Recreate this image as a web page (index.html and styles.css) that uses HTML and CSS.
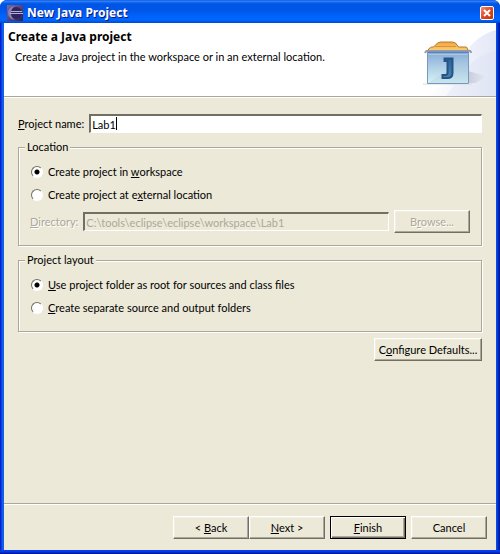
FILE: index.html
```html
<!DOCTYPE html>
<html lang="en">
<head>
  <meta charset="UTF-8">
  <title>New Java Project</title>
  <link rel="stylesheet" href="styles.css">
</head>
<body>
<form class="window">
  <div class="titlebar">
    <svg class="app-icon" width="16" height="16" viewBox="0 0 16 16">
      <defs>
        <linearGradient id="moon" x1="0" y1="0" x2="1" y2="1">
          <stop offset="0" stop-color="#7a6b9c"/>
          <stop offset=".5" stop-color="#54467c"/>
          <stop offset="1" stop-color="#2c2254"/>
        </linearGradient>
      </defs>
      <rect width="16" height="16" fill="url(#moon)"/>
      <circle cx="9" cy="8" r="6" fill="#30245c"/>
      <path d="M8 1C3 2 1 5 1 8s2 6 7 7C5 13 4 11 4 8s1-5 4-7z" fill="#8d80b4"/>
      <path d="M4 6.500h11M3 8.500h13" stroke="#b4b0dc" fill="none"/>
    </svg>
    <span class="caption">New Java Project</span>
    <button type="button" class="close" aria-label="Close">
      <svg width="8" height="8" viewBox="0 0 8 8"><path d="M1 1l6 6M7 1L1 7" stroke="#fff" stroke-width="2"/></svg>
    </button>
  </div>

  <div class="client">
    <div class="header">
      <div class="header-text">
        <h1>Create a Java project</h1>
        <p>Create a Java project in the workspace or in an external location.</p>
      </div>
      <svg class="banner" width="90" height="73" viewBox="0 0 90 73">
        <defs>
          <linearGradient id="sky" x1="0" y1="0" x2="1" y2="0">
            <stop offset="0" stop-color="#fff"/>
            <stop offset="1" stop-color="#e4e8f7"/>
          </linearGradient>
          <linearGradient id="front" x1="0" y1="0" x2="0" y2="1">
            <stop offset="0" stop-color="#86a9d6"/>
            <stop offset=".5" stop-color="#b0d0e6"/>
            <stop offset="1" stop-color="#d8f4f4"/>
          </linearGradient>
          <linearGradient id="folder" x1="0" y1="0" x2="0" y2="1">
            <stop offset="0" stop-color="#f0a43c"/>
            <stop offset="1" stop-color="#fbd078"/>
          </linearGradient>
          <linearGradient id="letter" x1="0" y1="0" x2="0" y2="1">
            <stop offset="0" stop-color="#2a5f96"/>
            <stop offset="1" stop-color="#4a86b8"/>
          </linearGradient>
          <linearGradient id="shade" x1="0" y1="0" x2="1" y2="0">
            <stop offset="0" stop-color="#b4b6c4"/>
            <stop offset="1" stop-color="#b4b6c4" stop-opacity="0"/>
          </linearGradient>
        </defs>
        <path d="M20 73C50 60 54 16 90 7V73z" fill="url(#sky)"/>
        <path d="M40 73C58 50 66 31 90 28V73z" fill="#d6ddf3" opacity=".3"/>
        <path d="M62 60V48L80 53L70 60z" fill="url(#shade)" opacity=".6"/>
        <path d="M17 61H66" stroke="#d8dae2"/>
        <path d="M22.500 28v-2l3-2h2l4-4 3-1h12l3 1 3 4h8l1 2v2z" fill="url(#folder)" stroke="#b87a30"/>
        <path d="M29 23.500h21" stroke="#d99238"/>
        <path d="M19 30q1-3 4-2h38q4-1 4 2" fill="none" stroke="#9a9ca4" stroke-width="2"/>
        <path d="M21.500 28.500h41v32h-41z" fill="url(#front)" stroke="#7898bf"/>
        <path d="M22 29.500h40" stroke="#5f84b6"/>
        <path d="M22 31.500h40" stroke="#a9c6e6"/>
        <path d="M22 60L62 34V60z" fill="#a8c4dc" opacity=".3"/>
        <path d="M41.500 35.500h5V50q0 5-5 5h-5v-3h3q2 0 2-2V38h-3v-2.500z" fill="url(#letter)" stroke="#255485" stroke-width="2"/>
      </svg>
    </div>

    <div class="page">
      <div class="row">
        <label for="name"><u>P</u>roject name:</label>
        <div class="field">
          <input type="text" id="name" value="Lab1">
          <span class="caret"></span>
        </div>
      </div>

      <fieldset>
        <legend>Location</legend>
        <label class="option"><input type="radio" name="location" checked><span>Create project in <u>w</u>orkspace</span></label>
        <label class="option"><input type="radio" name="location"><span>Create project at e<u>x</u>ternal location</span></label>
        <div class="row directory">
          <label for="dir"><u>D</u>irectory:</label>
          <div class="field">
            <input type="text" id="dir" value="C:\tools\eclipse\eclipse\workspace\Lab1" disabled>
          </div>
          <button type="button" class="btn" disabled>B<u>r</u>owse...</button>
        </div>
      </fieldset>

      <fieldset>
        <legend>Project layout</legend>
        <label class="option"><input type="radio" name="layout" checked><span><u>U</u>se project folder as root for sources and class files</span></label>
        <label class="option"><input type="radio" name="layout"><span><u>C</u>reate separate source and output folders</span></label>
      </fieldset>

      <button type="button" class="btn configure">C<u>o</u>nfigure Defaults...</button>
    </div>

    <div class="footer">
      <div class="pair">
        <button type="button" class="btn">&lt; <u>B</u>ack</button>
        <button type="button" class="btn"><u>N</u>ext &gt;</button>
      </div>
      <button type="submit" class="btn default"><u>F</u>inish</button>
      <button type="button" class="btn">Cancel</button>
    </div>
  </div>
</form>
</body>
</html>
```
FILE: styles.css
```css
* { box-sizing: border-box; }

body {
	margin: 0;
	background-color: #fff;
	color: #000;
	font-family: Lato, "Liberation Sans", Arial, sans-serif;
	font-size: 11px;
	line-height: 14px;
}

button, input { font: inherit; color: inherit; }

/* window frame */
.window {
	display: flex;
	flex-direction: column;
	min-height: 100vh;
	padding-bottom: 4px;
	border-radius: 7px 7px 0 0;
	background:
		linear-gradient(#0441f0 1px, #0831d9 2px, #00138c) bottom / 100% 4px no-repeat,
		linear-gradient(90deg, #0010d0 0, #0831d9 1px, #166aee 3px, #0855dd 4px, #0855dd calc(100% - 4px), #0441f0 calc(100% - 3px), #001ea0 calc(100% - 1px), #00138c 100%);
	overflow: hidden;
}
.titlebar {
	display: flex;
	align-items: center;
	height: 23px;
	padding: 3px 6px 0 7px;
	background: linear-gradient(#0841c8 0, #3a8cff 1px, #1470f8 2px, #0054e3 4px, #0056e8 10px, #0062fa 16px, #0066ff 20px, #0048d0 23px);
}
.app-icon { margin-right: 4px; }
.caption {
	flex: 1;
	color: #fff;
	font-family: "Noto Sans", Verdana, sans-serif;
	font-size: 12px;
	font-weight: bold;
	text-shadow: 1px 1px #0a1883;
}
.close {
	display: flex;
	align-items: center;
	justify-content: center;
	width: 14px;
	height: 14px;
	padding: 0;
	border: 1px solid #fff;
	border-radius: 2px;
	background: linear-gradient(135deg, #f09078, #e04820 50%, #c03408);
}

.client {
	flex: 1;
	display: flex;
	flex-direction: column;
	margin: 0 4px;
	background-color: #ece9d8;
}

/* wizard header */
.header {
	display: flex;
	justify-content: space-between;
	height: 74px;
	background-color: #fff;
	border-bottom: 1px solid #aca899;
}
.header-text { padding: 7px 0 0 4px; }
.header h1 {
	margin: 0;
	font-family: "Noto Sans", Verdana, sans-serif;
	font-size: 12px;
	line-height: 14px;
}
.header p { margin: 6px 0 0 7px; white-space: nowrap; }

/* wizard page */
.page {
	flex: 1;
	display: flex;
	flex-direction: column;
	padding: 16px 14px;
	border-top: 1px solid #fff;
}
.row { display: flex; align-items: center; gap: 5px; }
.field { position: relative; flex: 1; display: flex; }
.field input {
	width: 100%;
	height: 19px;
	padding: 0 1px;
	border: 2px solid;
	border-color: #716f64 #f1efe2 #f1efe2 #716f64;
	border-bottom: 1px solid #fff;
	border-right: 1px solid #fff;
	background-color: #fff;
	outline: none;
}
.field input:disabled { background-color: #ece9d8; color: #aca899; }
.caret {
	position: absolute;
	left: 27px;
	top: 3px;
	width: 1px;
	height: 13px;
	background-color: #000;
}

fieldset {
	min-width: 0;
	margin: 7px 0 0;
	padding: 6px 11px 12px;
	border: 1px solid #aca899;
	box-shadow: 1px 1px #fff, inset 1px 1px #fff;
}
legend {
	margin-left: -5px;
	padding: 0 2px;
	background-color: #ece9d8;
}
.option {
	display: flex;
	align-items: center;
	gap: 5px;
	height: 23px;
	margin-left: 1px;
}
.option input {
	appearance: none;
	width: 12px;
	height: 12px;
	margin: 0;
	border: 1px solid;
	border-color: #716f64 #fff #fff #716f64;
	border-radius: 50%;
	background-color: #fff;
}
.option input:checked { background-image: radial-gradient(circle, #000 2px, #fff 3px); }
.directory { margin-top: 4px; }
.directory label { color: #aca899; text-shadow: 1px 1px #fff; }

/* buttons */
.btn {
	width: 76px;
	height: 23px;
	padding: 0;
	border: 1px solid;
	border-color: #fff #716f64 #716f64 #fff;
	box-shadow: inset -1px -1px #aca899, inset 1px 1px #f1efe2;
	background-color: #ece9d8;
	white-space: nowrap;
}
.btn:disabled { color: #aca899; text-shadow: 1px 1px #fff; }
.btn.default {
	border-color: #000;
	box-shadow: inset 1px 1px #fff, inset -1px -1px #716f64, inset -2px -2px #aca899;
}
.btn.configure {
	align-self: flex-end;
	width: 108px;
	margin-top: 6px;
}

.footer {
	display: flex;
	justify-content: flex-end;
	gap: 5px;
	padding: 12px 9px 11px;
	border-top: 1px solid #aca899;
	box-shadow: inset 0 1px #fff;
}
.pair { display: flex; }
```
